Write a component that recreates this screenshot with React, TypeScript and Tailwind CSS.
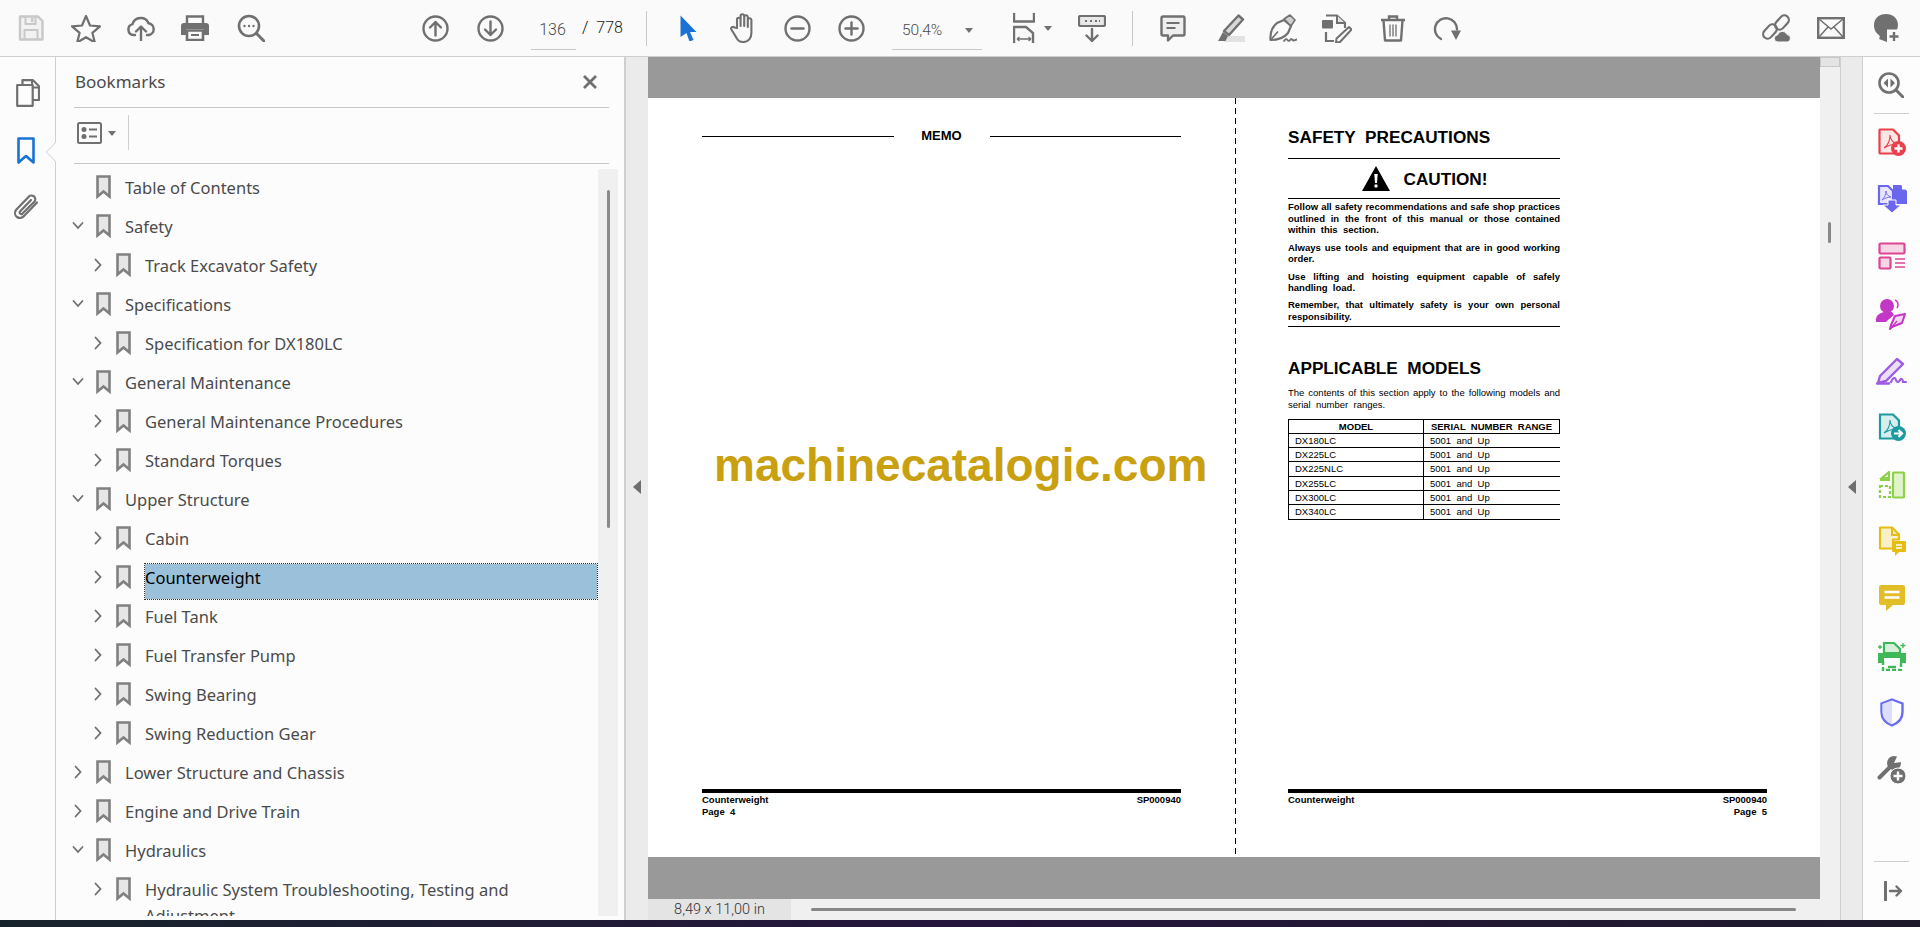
import React from "react";

const uiFont = "font-['Noto_Sans',sans-serif]";
const docFont = "font-['Liberation_Sans',Arial,sans-serif]";

// ── Toolbar icons ─────────────────────────────────────────────────────────────

function Ico({ w, h, ml = "", children }: { w: number; h: number; ml?: string; children: React.ReactNode }) {
  return (
    <svg width={w} height={h} viewBox={`0 0 ${w} ${h}`} fill="none" className={`shrink-0 ${ml}`}>
      {children}
    </svg>
  );
}

const G = "#707070";

function SaveIcon() {
  return (
    <Ico w={26} h={26} ml="ml-[18px]">
      <path d="M2 1.500h18l4.500 4.500v18.500h-22.500z" stroke="#c8c8c8" strokeWidth="2.400" strokeLinejoin="round" fill="#f2f2f2" />
      <path d="M7.500 2v7h10v-7M6.500 24v-9h13v9" stroke="#c8c8c8" strokeWidth="2" />
      <rect x="13" y="3" width="2.400" height="4" fill="#c8c8c8" />
    </Ico>
  );
}

function StarIcon() {
  return (
    <Ico w={30} h={28} ml="ml-[27px]">
      <path d="M15 2l4 9.500 10 .8-7.600 6.500 2.400 9.700-8.800-5.300-8.800 5.300 2.400-9.700L1 12.300l10-.8z" stroke={G} strokeWidth="2.200" strokeLinejoin="round" />
    </Ico>
  );
}

function CloudIcon() {
  return (
    <Ico w={28} h={26} ml="ml-[26px]">
      <path d="M8 20H6.500A5.500 5.500 0 0 1 5.500 9.200 8.500 8.500 0 0 1 21.500 8.200a6 6 0 0 1 .5 11.800h-2" stroke={G} strokeWidth="2.400" strokeLinecap="round" />
      <path d="M14 25.500V12M9 16.500l5-5 5 5" stroke={G} strokeWidth="2.400" strokeLinecap="round" strokeLinejoin="round" />
    </Ico>
  );
}

function PrintIcon() {
  return (
    <Ico w={28} h={26} ml="ml-[26px]">
      <path d="M6 8V1.500h16V8" stroke={G} strokeWidth="2.400" />
      <path d="M3 8h22a3 3 0 0 1 3 3v9h-5v-6H5v6H0v-9a3 3 0 0 1 3-3z" fill={G} />
      <path d="M6 15.500h16v9.500H6z" stroke={G} strokeWidth="2.600" />
      <rect x="10" y="19" width="8" height="2" fill={G} />
    </Ico>
  );
}

function SearchDotsIcon() {
  return (
    <Ico w={28} h={28} ml="ml-[28px]">
      <circle cx="12" cy="12" r="10" stroke={G} strokeWidth="2.600" />
      <path d="M19.500 19.500l7.500 7.500" stroke={G} strokeWidth="3" strokeLinecap="round" />
      <circle cx="7.500" cy="12" r="1.200" fill={G} />
      <circle cx="12" cy="12" r="1.200" fill={G} />
      <circle cx="16.500" cy="12" r="1.200" fill={G} />
    </Ico>
  );
}

function CircleIcon({ kind, ml }: { kind: "up" | "down" | "minus" | "plus"; ml: string }) {
  return (
    <Ico w={27} h={27} ml={ml}>
      <circle cx="13.500" cy="13.500" r="12" stroke={G} strokeWidth="2.400" />
      {kind === "up" && <path d="M13.500 20.500V7M8 12.500l5.500-5.500 5.500 5.500" stroke={G} strokeWidth="2.400" strokeLinecap="round" strokeLinejoin="round" />}
      {kind === "down" && <path d="M13.500 6.500V20M8 14.500l5.500 5.500 5.500-5.500" stroke={G} strokeWidth="2.400" strokeLinecap="round" strokeLinejoin="round" />}
      {(kind === "minus" || kind === "plus") && <path d="M7.500 13.500h12" stroke={G} strokeWidth="2.400" strokeLinecap="round" />}
      {kind === "plus" && <path d="M13.500 7.500v12" stroke={G} strokeWidth="2.400" strokeLinecap="round" />}
    </Ico>
  );
}

function Caret({ ml }: { ml: string }) {
  return <div className={`w-0 h-0 shrink-0 border-x-[4px] border-x-transparent border-t-[5px] border-t-[#707070] ${ml}`} />;
}

function Sep({ ml }: { ml: string }) {
  return <div className={`w-px h-[35px] bg-[#c8c8c8] shrink-0 ${ml}`} />;
}

function TopBar() {
  return (
    <header className={`h-[57px] bg-[#fafafa] border-b border-[#cfcfcf] flex items-center ${uiFont}`}>
      <SaveIcon />
      <StarIcon />
      <CloudIcon />
      <PrintIcon />
      <SearchDotsIcon />
      <CircleIcon kind="up" ml="ml-[157px]" />
      <CircleIcon kind="down" ml="ml-[28px]" />
      <div className="ml-[27px] w-[45px] h-[33px] mt-[10px] border-b border-[#c8c8c8] pr-[2px] text-center text-[16px] leading-[26px] text-[#4b4b4b] font-['Roboto',sans-serif] font-light">136</div>
      <span className="ml-[6px] text-[16px] text-black font-['Roboto',sans-serif] font-light">/</span>
      <span className="ml-[8px] text-[16px] text-[#222] font-['Roboto',sans-serif] font-light">778</span>
      <Sep ml="ml-[23px]" />
      {/* cursor */}
      <Ico w={17} h={26} ml="ml-[33px]">
        <path d="M0.500 0.500L16.500 17h-6.500l3.500 8-4 1.500-3-8.500L0.500 22z" fill="#1a73d4" />
      </Ico>
      {/* hand */}
      <Ico w={28} h={30} ml="ml-[33px]">
        <path d="M7 15V6.500a1.800 1.800 0 0 1 3.600 0V13V3a1.800 1.800 0 0 1 3.600 0v10V4a1.800 1.800 0 0 1 3.600 0v10V7a1.800 1.800 0 0 1 3.600 0v13c0 5-3 9-8 9-4.500 0-6-2-8-6l-4-6.500c-1-2 1.500-3.500 3-2z" stroke={G} strokeWidth="2.100" strokeLinejoin="round" />
      </Ico>
      <CircleIcon kind="minus" ml="ml-[26px]" />
      <CircleIcon kind="plus" ml="ml-[27px]" />
      <div className="ml-[27px] w-[90px] h-[33px] mt-[10px] border-b border-[#c8c8c8] flex items-start pl-[10px]">
        <span className="text-[15.500px] leading-[26px] text-[#4b4b4b] font-['Roboto',sans-serif] font-light">50,4%</span>
        <Caret ml="ml-[23px] mt-[11px]" />
      </div>
      {/* fit width */}
      <Ico w={22} h={30} ml="ml-[31px]">
        <path d="M1 0v8.500h20V0" stroke={G} strokeWidth="2.400" />
        <path d="M1 30V14h12l7 6v10" stroke={G} strokeWidth="2.400" />
        <path d="M4 26h14M4 26l2.500-2M4 26l2.500 2M18 26l-2.500-2M18 26l-2.500 2" stroke={G} strokeWidth="1.300" />
      </Ico>
      <Caret ml="ml-[9px]" />
      {/* scroll mode */}
      <Ico w={28} h={27} ml="ml-[26px]">
        <rect x="1" y="1" width="26" height="10" rx="1.500" stroke={G} strokeWidth="2.200" fill="#e8e8e8" />
        <path d="M7 6h2M12 6h2M17 6h2M21 6h1" stroke={G} strokeWidth="2" />
        <path d="M14 14v12M8.500 20.500l5.500 5.500 5.500-5.500" stroke={G} strokeWidth="2.400" strokeLinecap="round" strokeLinejoin="round" />
      </Ico>
      <Sep ml="ml-[26px]" />
      {/* comment */}
      <Ico w={26} h={27} ml="ml-[27px]">
        <path d="M3 1.500h20a1.500 1.500 0 0 1 1.500 1.500v16a1.500 1.500 0 0 1-1.500 1.500H13l-5 5v-5H3A1.500 1.500 0 0 1 1.500 19V3A1.500 1.500 0 0 1 3 1.500z" stroke={G} strokeWidth="2.400" strokeLinejoin="round" fill="#efefef" />
        <path d="M6.500 8h13M6.500 13h9" stroke={G} strokeWidth="1.800" />
      </Ico>
      {/* highlighter */}
      <Ico w={29} h={28} ml="ml-[30px]">
        <rect x="8" y="22" width="21" height="6" fill="#e2e2e2" />
        <path d="M22.500 1.500l4.500 4L13 21l-5-4z" stroke={G} strokeWidth="2.400" strokeLinejoin="round" fill="#d8d8d8" />
        <path d="M7 18l5 4-2.500 5H2z" fill={G} />
      </Ico>
      {/* sign */}
      <Ico w={28} h={28} ml="ml-[24px]">
        <path d="M1.500 26C1 19 3 13 8 9l7-3 7 6-3 7c-4 5-10 7-17.500 7z" stroke={G} strokeWidth="2.200" strokeLinejoin="round" />
        <path d="M15 5l6-4 5 5-4 6z" fill="#d0d0d0" stroke={G} strokeWidth="1.600" strokeLinejoin="round" />
        <path d="M2 25.500l7-8" stroke={G} strokeWidth="1.600" />
        <path d="M15 27c1.500-2 2.500-2.500 3.500-1s2 1 3-.5 2 1 3 1 2-1 3.500-1" stroke={G} strokeWidth="1.800" strokeLinecap="round" />
      </Ico>
      {/* edit doc */}
      <Ico w={30} h={29} ml="ml-[25px]">
        <path d="M4 1.500h11l8 7.500v5" stroke={G} strokeWidth="2.200" />
        <path d="M15 1.500v7.500h8" stroke={G} strokeWidth="2" fill="#e0e0e0" />
        <rect x="0" y="6" width="11" height="8.500" rx="1" fill={G} />
        <path d="M4 18v9h8" stroke={G} strokeWidth="2.200" />
        <path d="M27 13l2.500 2.500L18 28l-4 .5.500-4z" stroke={G} strokeWidth="2" strokeLinejoin="round" />
      </Ico>
      {/* trash */}
      <Ico w={26} h={27} ml="ml-[28px]">
        <path d="M1 5h24M9 5V1.500h8V5" stroke={G} strokeWidth="2.400" />
        <path d="M3.500 5.500l1.500 20h16l1.500-20" stroke={G} strokeWidth="2.400" strokeLinejoin="round" />
        <path d="M10 9.500v12M13 9.500v12M16 9.500v12" stroke={G} strokeWidth="1.300" />
      </Ico>
      {/* redo */}
      <Ico w={28} h={25} ml="ml-[27px]">
        <path d="M8 23A11 11 0 1 1 24 13.500" stroke={G} strokeWidth="2.400" strokeLinecap="round" />
        <path d="M18 14.500h10L23 24z" fill={G} />
      </Ico>
      {/* link cloud */}
      <Ico w={30} h={28} ml="ml-[300px]">
        <rect x="13" y="4" width="16" height="9" rx="4.500" stroke={G} strokeWidth="2.200" transform="rotate(-48 21 8.500)" />
        <rect x="1" y="13" width="16" height="9" rx="4.500" stroke={G} strokeWidth="2.200" transform="rotate(-48 9 17.500)" />
        <path d="M17 28a3.500 3.500 0 0 1-.5-7 5 5 0 0 1 9.500-.5 3.800 3.800 0 0 1 .5 7.500z" fill={G} stroke="#fafafa" strokeWidth="1" />
      </Ico>
      {/* mail */}
      <Ico w={28} h={22} ml="ml-[26px]">
        <rect x="1.200" y="1.200" width="25.600" height="19.600" stroke={G} strokeWidth="2.400" />
        <path d="M2 2l12 10 12-10M2 20l9-10M26 20l-9-10" stroke={G} strokeWidth="1.500" />
      </Ico>
      {/* user */}
      <Ico w={28} h={28} ml="ml-[28px]">
        <path d="M13 0C6 0 1 4.500 1 11c0 5 2 8 5 10 1 1 1 3 0 4l8 3h3l-1-5c2-1 3-1 4-3 3-2 5-5 5-9C25 4.500 20 0 13 0z" fill={G} />
        <rect x="14" y="15.500" width="14" height="12.500" fill="#fafafa" />
        <path d="M21 18v9M16.500 22.500h9" stroke={G} strokeWidth="2.400" />
      </Ico>
    </header>
  );
}

// ── Bookmarks panel ───────────────────────────────────────────────────────────

function RailIcons() {
  return (
    <div className="w-[56px] shrink-0 bg-[#fcfcfc] border-r border-[#cfcfcf] relative flex flex-col items-start">
      {/* pages */}
      <svg width="24" height="28" viewBox="0 0 24 28" fill="none" className="ml-[16px] mt-[22px]">
        <path d="M6.500 5V1.200h10.500l6 6V21H17" stroke={G} strokeWidth="2.200" strokeLinejoin="round" />
        <path d="M16 1.500v7h7" stroke={G} strokeWidth="2" />
        <path d="M1.200 6h15.500v20.800H1.200z" stroke={G} strokeWidth="2.200" fill="#fcfcfc" strokeLinejoin="round" />
      </svg>
      {/* bookmark */}
      <svg width="18" height="28" viewBox="0 0 18 28" fill="none" className="ml-[17px] mt-[30px]">
        <path d="M1.500 1.500h15v24l-7.500-6.500-7.500 6.500z" stroke="#1a73d4" strokeWidth="2.600" strokeLinejoin="round" />
      </svg>
      {/* attachments */}
      <svg width="26" height="27" viewBox="0 0 26 27" fill="none" className="ml-[13px] mt-[29px]">
        <path d="M24 8.500L11 22a5 5 0 0 1-8-6L15.500 3a3.500 3.500 0 0 1 6 4.500L9.500 19.500a1.500 1.500 0 0 1-2.500-2L18 6" stroke={G} strokeWidth="2.200" strokeLinecap="round" />
      </svg>
      {/* panel pointer */}
      <svg width="10" height="20" viewBox="0 0 10 20" className="absolute left-[46px] top-[85px]">
        <path d="M10 0L0.500 10 10 20" fill="#fcfcfc" stroke="#cfcfcf" />
      </svg>
    </div>
  );
}

type Node = { label: string; level: 0 | 1; state: "open" | "closed" | "none"; selected?: boolean };

const bookmarks: Node[] = [
  { label: "Table of Contents", level: 0, state: "none" },
  { label: "Safety", level: 0, state: "open" },
  { label: "Track Excavator Safety", level: 1, state: "closed" },
  { label: "Specifications", level: 0, state: "open" },
  { label: "Specification for DX180LC", level: 1, state: "closed" },
  { label: "General Maintenance", level: 0, state: "open" },
  { label: "General Maintenance Procedures", level: 1, state: "closed" },
  { label: "Standard Torques", level: 1, state: "closed" },
  { label: "Upper Structure", level: 0, state: "open" },
  { label: "Cabin", level: 1, state: "closed" },
  { label: "Counterweight", level: 1, state: "closed", selected: true },
  { label: "Fuel Tank", level: 1, state: "closed" },
  { label: "Fuel Transfer Pump", level: 1, state: "closed" },
  { label: "Swing Bearing", level: 1, state: "closed" },
  { label: "Swing Reduction Gear", level: 1, state: "closed" },
  { label: "Lower Structure and Chassis", level: 0, state: "closed" },
  { label: "Engine and Drive Train", level: 0, state: "closed" },
  { label: "Hydraulics", level: 0, state: "open" },
  { label: "Hydraulic System Troubleshooting, Testing and\nAdjustment", level: 1, state: "closed" },
];

function Row({ node }: { node: Node }) {
  return (
    <div className={`h-[39px] shrink-0 flex items-start pt-[6px] ${node.level === 0 ? "pl-[16px]" : "pl-[36px]"}`}>
      <svg width="12" height="14" viewBox="0 0 12 14" fill="none" className="mt-[5px] shrink-0">
        {node.state === "open" && <path d="M1.500 4l4.500 5 4.500-5" stroke={G} strokeWidth="1.800" strokeLinecap="round" />}
        {node.state === "closed" && <path d="M3.500 1.500l5 5.500-5 5.500" stroke={G} strokeWidth="1.800" strokeLinecap="round" />}
      </svg>
      <svg width="15" height="24" viewBox="0 0 15 24" fill="none" className="ml-[12px] shrink-0">
        <path d="M1.500 1.500h12v20l-6-5-6 5z" stroke="#808080" strokeWidth="2.600" fill="#e6e6e6" strokeLinejoin="miter" />
      </svg>
      <div
        className={
          node.selected
            ? "ml-[14px] mr-[1px] flex-1 h-[35px] mt-[-1px] pt-[1px] bg-[#9ac0da] outline-1 outline-dotted outline-[#333] text-black text-[16.500px] leading-[26px]"
            : "ml-[14px] text-[#4b4b4b] text-[16.500px] leading-[26px] whitespace-pre-line"
        }
      >
        {node.label}
      </div>
    </div>
  );
}

function BookmarksPanel() {
  return (
    <aside className={`w-[570px] shrink-0 bg-[#fcfcfc] border-r-[2px] border-[#cfcfcf] flex flex-col ${uiFont}`}>
      <div className="h-[50px] shrink-0 flex items-center pl-[19px] pr-[27px] justify-between">
        <span className="text-[17px] text-[#4b4b4b]">Bookmarks</span>
        <svg width="14" height="14" viewBox="0 0 14 14" fill="none">
          <path d="M1 1l12 12M13 1L1 13" stroke={G} strokeWidth="2.800" />
        </svg>
      </div>
      <div className="h-px bg-[#c8c8c8] ml-[18px] w-[535px] shrink-0" />
      <div className="h-[55px] shrink-0 flex items-center pl-[21px] pb-[6px]">
        <svg width="25" height="22" viewBox="0 0 25 22" fill="none" className="mt-[1px]">
          <rect x="1" y="1" width="23" height="20" rx="1.500" stroke={G} strokeWidth="2" />
          <circle cx="7" cy="7.500" r="2.500" fill={G} />
          <circle cx="7" cy="14.500" r="2.500" fill={G} />
          <path d="M12 7.500h8M12 14.500h8" stroke={G} strokeWidth="2" />
        </svg>
        <Caret ml="ml-[6px] mt-[1px]" />
        <div className="w-px h-[35px] bg-[#cfcfcf] ml-[12px]" />
      </div>
      <div className="h-px bg-[#c8c8c8] ml-[18px] w-[535px] shrink-0" />
      <div className="flex-1 min-h-0 flex items-start pt-[5px]">
        <div className="w-[542px] h-[747px] overflow-hidden flex flex-col">
          {bookmarks.map((b) => (
            <Row key={b.label} node={b} />
          ))}
        </div>
        <div className="w-[20px] h-[747px] bg-[#f0f0f0] flex justify-center pt-[21px]">
          <div className="w-[3px] h-[338px] bg-[#8a8a8a] rounded-full" />
        </div>
      </div>
    </aside>
  );
}

function CollapseStrip({ className }: { className: string }) {
  return (
    <div className={`shrink-0 bg-[#ebebeb] flex items-center justify-center pb-[3px] ${className}`}>
      <div className="w-0 h-0 border-y-[7px] border-y-transparent border-r-[8px] border-r-[#6e6e6e]" />
    </div>
  );
}

// ── Document pages ────────────────────────────────────────────────────────────

function PageFooter({ page, right }: { page: string; right?: boolean }) {
  return (
    <div className="mt-auto h-[68px] w-[479px] shrink-0 font-bold text-[9.500px] leading-[12px] text-black">
      <div className="h-[4px] bg-black mb-[1px]" />
      <div className="flex justify-between">
        <span>Counterweight</span>
        <span>SP000940</span>
      </div>
      <div className={`whitespace-pre ${right ? "text-right" : ""}`}>{page}</div>
    </div>
  );
}

function Line({ children, last }: { children: string; last?: boolean }) {
  return (
    <div className={last ? "whitespace-pre" : "text-justify [text-align-last:justify] whitespace-nowrap"}>{children}</div>
  );
}

const models = ["DX180LC", "DX225LC", "DX225NLC", "DX255LC", "DX300LC", "DX340LC"];

function RightPage() {
  return (
    <div className="w-[584px] shrink-0 pl-[52px] flex flex-col text-black">
      <div className="mt-[28px] text-[17.200px] leading-[22px] font-bold whitespace-pre">SAFETY  PRECAUTIONS</div>
      <div className="w-[272px] h-px bg-black mt-[10px]" />
      <div className="w-[272px] h-[38.500px] flex items-center justify-center gap-[13px] pl-[2px]">
        <svg width="28" height="25" viewBox="0 0 28 25">
          <path d="M14 0L28 25H0z" fill="#000" />
          <path d="M12.300 8h3.400l-.7 9h-2z" fill="#fff" />
          <circle cx="14" cy="20" r="1.700" fill="#fff" />
        </svg>
        <span className="text-[17.200px] font-bold mt-[3px]">CAUTION!</span>
      </div>
      <div className="w-[272px] h-px bg-black" />
      <div className="w-[272px] pt-[2.500px] flex flex-col gap-[5.500px] text-[9.500px] leading-[11.700px] font-bold">
        <div>
          <Line>Follow all safety recommendations and safe shop practices</Line>
          <Line>outlined in the front of this manual or those contained</Line>
          <Line last>within  this  section.</Line>
        </div>
        <div>
          <Line>Always use tools and equipment that are in good working</Line>
          <Line last>order.</Line>
        </div>
        <div>
          <Line>Use lifting and hoisting equipment capable of safely</Line>
          <Line last>handling  load.</Line>
        </div>
        <div>
          <Line>Remember, that ultimately safety is your own personal</Line>
          <Line last>responsibility.</Line>
        </div>
      </div>
      <div className="w-[272px] h-px bg-black mt-[3px]" />
      <div className="mt-[30.500px] text-[17.200px] leading-[22px] font-bold whitespace-pre">APPLICABLE  MODELS</div>
      <div className="w-[272px] mt-[8px] text-[9.500px] leading-[12px]">
        <Line>The contents of this section apply to the following models and</Line>
        <Line last>serial  number  ranges.</Line>
      </div>
      <table className="w-[272px] mt-[8px] table-fixed border-collapse text-[9.500px]">
        <thead>
          <tr className="h-[14px]">
            <th className="w-[135px] border border-black p-0 leading-[12px] font-bold">MODEL</th>
            <th className="border border-black p-0 leading-[12px] font-bold whitespace-pre">SERIAL  NUMBER  RANGE</th>
          </tr>
        </thead>
        <tbody>
          {models.map((m, i) => (
            <tr key={m} className={i === 2 || i === 5 ? "h-[15px]" : "h-[14px]"}>
              <td className="border border-black p-0 pl-[6px] leading-[12px]">{m}</td>
              <td className="border border-black border-r-0 p-0 pl-[6px] leading-[12px] whitespace-pre">5001  and  Up</td>
            </tr>
          ))}
        </tbody>
      </table>
      <PageFooter page="Page  5" right />
    </div>
  );
}

function DocView() {
  return (
    <div className={`w-[1172px] shrink-0 flex flex-col ${docFont}`}>
      <div className="h-[41px] bg-[#999999]" />
      <div className="h-[759px] bg-white flex relative">
        <div className="w-[587px] shrink-0 pl-[54px] flex flex-col text-black">
          <div className="w-[479px] mt-[28px] h-[20px] flex items-center">
            <div className="flex-1 h-px bg-black" />
            <span className="w-[96px] text-center text-[13px] font-bold">MEMO</span>
            <div className="flex-1 h-px bg-black" />
          </div>
          <PageFooter page="Page  4" />
        </div>
        <div className="w-px h-[756px] shrink-0 bg-[repeating-linear-gradient(to_bottom,#000_0,#000_6px,transparent_6px,transparent_10px)]" />
        <RightPage />
        {/* watermark printed over the pages */}
        <div className="absolute left-[66px] top-[343px] text-[46px] leading-[48px] font-bold text-[#c9a010] whitespace-nowrap">
          machinecatalogic.com
        </div>
      </div>
      <div className="h-[42px] bg-[#999999]" />
    </div>
  );
}

function StatusBar() {
  return (
    <div className={`h-[21px] shrink-0 bg-[#f0f0f0] flex items-center ${uiFont}`}>
      <div className="w-[143px] h-full bg-[#e4e4e4] flex items-center justify-center text-[14.500px] text-[#333] font-['Roboto',sans-serif] font-light">
        8,49 x 11,00 in
      </div>
      <div className="ml-[20px] w-[985px] h-[3.500px] bg-[#868686] rounded-full" />
    </div>
  );
}

// ── Right tool rail ───────────────────────────────────────────────────────────

function RightRail() {
  return (
    <div className="w-[57px] shrink-0 bg-[#fdfdfd] flex flex-col items-center">
      {/* zoom compare */}
      <svg width="26" height="26" viewBox="0 0 26 26" fill="none" className="mt-[15px] mr-[1px]">
        <circle cx="11" cy="11" r="9.500" stroke={G} strokeWidth="2.600" />
        <path d="M18 18l7 7" stroke={G} strokeWidth="3" strokeLinecap="round" />
        <path d="M10 6.500L5.500 11l4.500 4.500zM12.500 6.500v9L17 11z" fill={G} />
      </svg>
      <div className="w-[35px] h-px bg-[#cfcfcf] mt-[15px]" />
      <svg width="28" height="28" viewBox="0 0 28 28" fill="none" className="mt-[14px]">
        <path d="M2 1.500h13l6 6v18H2a1 1 0 0 1-.5-1V2.500A1 1 0 0 1 2 1.500z" stroke="#e8404d" strokeWidth="2.200" fill="#fbe6e6" />
        <path d="M6 20c3-2 6-7 6-13 0 4 3 8 7 9-4 0-8 1-13 4z" stroke="#e8404d" strokeWidth="1.100" />
        <circle cx="20.500" cy="20.500" r="7.500" fill="#e8404d" />
        <path d="M16.500 20.500h8M20.500 16.500v8" stroke="#fff" strokeWidth="2.400" />
      </svg>
      <svg width="30" height="30" viewBox="0 0 30 30" fill="none" className="mt-[28px]">
        <path d="M16 1h8l6 6v13H16z" fill="#6a66ee" />
        <path d="M25 0l5 5.500h-5z" fill="#fff" />
        <path d="M2 2h9l5 5v13H2z" stroke="#6a66ee" strokeWidth="2.200" fill="#e7e6fb" />
        <path d="M5 16c2-2 4-5 4-9 0 3 2 5 5 6-3 0-6 1-9 3z" stroke="#6a66ee" strokeWidth="0.900" />
        <path d="M11 16h8v5h5l-9 8-9-8h5z" fill="#6a66ee" stroke="#fdfdfd" strokeWidth="1" />
      </svg>
      <svg width="28" height="28" viewBox="0 0 28 28" fill="none" className="mt-[28px]">
        <rect x="1.500" y="1.500" width="25" height="10" rx="1" stroke="#dc4494" strokeWidth="2.200" fill="#f6d6e6" />
        <rect x="1.500" y="15.500" width="11" height="11" rx="1" stroke="#dc4494" strokeWidth="2.200" fill="#f6d6e6" />
        <path d="M17 17h10M17 21h10M17 25h10" stroke="#dc4494" strokeWidth="1.500" />
      </svg>
      <svg width="31" height="32" viewBox="0 0 31 32" fill="none" className="mt-[28px]">
        <circle cx="11" cy="8" r="7" fill="#c237c6" />
        <path d="M0 22c0-5 4-7 8-8h8l2 3-6 5-2 2H0z" fill="#c237c6" />
        <path d="M19 2c3 1 4 5 2 8" stroke="#c237c6" strokeWidth="1.500" />
        <path d="M29 16l-3 9-10 4-2 2 1-4 4-9 10-2z" stroke="#c237c6" strokeWidth="2" fill="#f4d6f4" strokeLinejoin="round" />
        <path d="M15 30l6-7" stroke="#c237c6" strokeWidth="1.300" />
      </svg>
      <svg width="31" height="28" viewBox="0 0 31 28" fill="none" className="mt-[27px]">
        <path d="M2 26l2-7L21 2l6 5-17 17z" stroke="#9d5ce3" strokeWidth="2.400" strokeLinejoin="round" fill="#ecdff9" />
        <path d="M1 26.500h12" stroke="#9d5ce3" strokeWidth="2.400" strokeLinecap="round" />
        <path d="M15 25c2-5 4-5 5-2s3 2 4 0 3-1 3 2h3" stroke="#9d5ce3" strokeWidth="2.200" strokeLinecap="round" />
      </svg>
      <svg width="28" height="28" viewBox="0 0 28 28" fill="none" className="mt-[28px]">
        <path d="M2 1.500h13l6 6v18H2z" stroke="#1c9aa0" strokeWidth="2.200" fill="#d6eeee" />
        <path d="M6 20c3-2 6-7 6-13 0 4 3 8 7 9-4 0-8 1-13 4z" stroke="#1c9aa0" strokeWidth="1.100" />
        <circle cx="20.500" cy="20.500" r="7.500" fill="#1c9aa0" />
        <path d="M16 20.500h7M20.500 17l3.500 3.500-3.500 3.500" stroke="#fff" strokeWidth="2.200" />
      </svg>
      <svg width="27" height="28" viewBox="0 0 27 28" fill="none" className="mt-[30px]">
        <rect x="15" y="1.500" width="11" height="25" rx="1" stroke="#8dd04a" strokeWidth="2.200" fill="#e0f4cc" />
        <path d="M2 15h10v11H2z" stroke="#8dd04a" strokeWidth="2.200" strokeDasharray="3 2" />
        <path d="M2 9h10M11 1L4 7l7 0z" stroke="#8dd04a" strokeWidth="2.200" />
      </svg>
      <svg width="28" height="30" viewBox="0 0 28 30" fill="none" className="mt-[27px]">
        <path d="M2 1.500h12l7 7v5h-6v9H2z" stroke="#e6bd12" strokeWidth="2.200" fill="#f8f0c8" strokeLinejoin="round" />
        <path d="M14 2v7h7" stroke="#e6bd12" strokeWidth="2" />
        <path d="M15 15h12a1 1 0 0 1 1 1v9a1 1 0 0 1-1 1h-6l-4 4v-4h-2a1 1 0 0 1-1-1v-9a1 1 0 0 1 1-1z" fill="#e6bd12" />
        <path d="M18 19h6M18 22h6" stroke="#fff" strokeWidth="1.500" />
      </svg>
      <svg width="26" height="28" viewBox="0 0 26 28" fill="none" className="mt-[28px]">
        <path d="M2 1h22a2 2 0 0 1 2 2v16a2 2 0 0 1-2 2H14l-7 6v-6H2a2 2 0 0 1-2-2V3a2 2 0 0 1 2-2z" fill="#e3bd28" />
        <path d="M5.500 8h15M5.500 13.500h15" stroke="#fff" strokeWidth="2.400" />
      </svg>
      <svg width="30" height="30" viewBox="0 0 30 30" fill="none" className="mt-[29px]">
        <path d="M7 11V2h10l6 6v4H7z" stroke="#3fb957" strokeWidth="2.200" fill="#d6efd9" />
        <path d="M1 12h28v10h-6v-5H7v5H1z" fill="#3fb957" />
        <path d="M6 20v9h18v-9" stroke="#3fb957" strokeWidth="2.400" strokeDasharray="4 2" />
        <path d="M11 26h8" stroke="#3fb957" strokeWidth="2.400" />
        <path d="M26 2v5M23.500 4.500h5M3 4v4M1 6h4" stroke="#3fb957" strokeWidth="1.300" />
      </svg>
      <svg width="24" height="29" viewBox="0 0 24 29" fill="none" className="mt-[27px]">
        <path d="M12 1.500l10.500 4V14c0 6-4 11-10.500 13.500C5.500 25 1.500 20 1.500 14V5.500z" stroke="#6a6cf0" strokeWidth="2.400" fill="none" />
        <path d="M12 2.500L2.500 6v8c0 6 4 10 9.500 12.500z" fill="#dcdcfb" />
      </svg>
      <svg width="29" height="29" viewBox="0 0 29 29" fill="none" className="mt-[28px]">
        <path d="M2.500 22.500L13 12" stroke={G} strokeWidth="4" strokeLinecap="round" />
        <circle cx="17" cy="8" r="7" fill={G} />
        <path d="M17 8l4-8.500 7 7z" fill="#fdfdfd" />
        <circle cx="21" cy="21" r="8" fill={G} stroke="#fdfdfd" strokeWidth="1" />
        <path d="M16.500 21h9M21 16.500v9" stroke="#fff" strokeWidth="2.400" />
      </svg>
      <div className="w-[35px] h-px bg-[#cfcfcf] mt-auto" />
      <svg width="19" height="20" viewBox="0 0 19 20" fill="none" className="mt-[19px] mb-[19px] ml-[3px]">
        <path d="M1.500 1v18" stroke={G} strokeWidth="3" strokeLinecap="round" />
        <path d="M6 10h11M12.500 5.500L17 10l-4.500 4.500" stroke={G} strokeWidth="2.400" strokeLinecap="round" strokeLinejoin="round" />
      </svg>
    </div>
  );
}

export default function App() {
  return (
    <div className="w-[1920px] h-[927px] overflow-hidden flex flex-col bg-white">
      <TopBar />
      <main className="h-[863px] flex">
        <RailIcons />
        <BookmarksPanel />
        <CollapseStrip className="w-[22px]" />
        <div className="w-[1192px] shrink-0 flex flex-col">
          <div className="h-[842px] flex">
            <DocView />
            <div className="w-[20px] bg-[#f0f0f0] flex flex-col">
              <div className="h-[10px] bg-[#e4e4e4] border border-[#c8c8c8]" />
              <div className="w-[3px] h-[21px] bg-[#888] rounded-full ml-[8px] mt-[155px]" />
            </div>
          </div>
          <StatusBar />
        </div>
        <CollapseStrip className="w-[23px] border-x border-[#cfcfcf]" />
        <RightRail />
      </main>
      <div className="h-[7px] bg-linear-to-r from-[#17232b] via-[#25143c] to-[#1e1a2b]" />
    </div>
  );
}
